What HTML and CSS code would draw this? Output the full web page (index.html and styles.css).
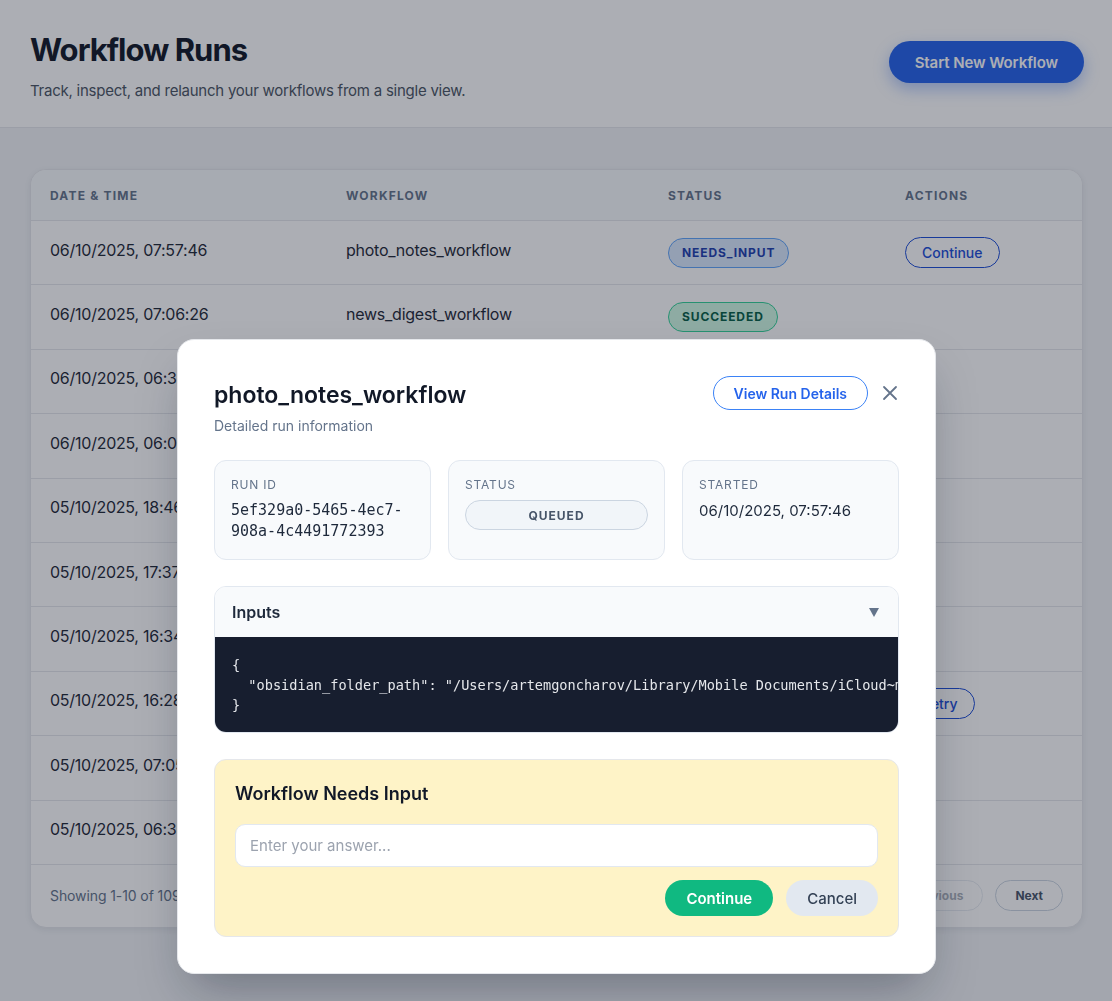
FILE: index.html
```html
<!DOCTYPE html>
<html lang="en">
<head>
<meta charset="utf-8">
<title>Workflow Runs</title>
<link rel="stylesheet" href="styles.css">
</head>
<body>
<header class="page-header">
  <div class="page-heading">
    <h1 class="page-title">Workflow Runs</h1>
    <p class="page-subtitle">Track, inspect, and relaunch your workflows from a single view.</p>
  </div>
  <button class="btn-primary" type="button">Start New Workflow</button>
</header>

<main class="page-main">
  <section class="runs-card">
    <table class="runs-table">
      <colgroup>
        <col class="col-date"><col class="col-workflow"><col class="col-status"><col class="col-actions">
      </colgroup>
      <thead>
        <tr><th>Date &amp; Time</th><th>Workflow</th><th>Status</th><th>Actions</th></tr>
      </thead>
      <tbody>
        <tr>
          <td class="cell-text">06/10/2025, 07:57:46</td>
          <td class="cell-text">photo_notes_workflow</td>
          <td><span class="badge badge-info">NEEDS_INPUT</span></td>
          <td><button class="btn-row" type="button">Continue</button></td>
        </tr>
        <tr>
          <td class="cell-text">06/10/2025, 07:06:26</td>
          <td class="cell-text">news_digest_workflow</td>
          <td><span class="badge badge-success">SUCCEEDED</span></td>
          <td></td>
        </tr>
        <tr>
          <td class="cell-text">06/10/2025, 06:31:12</td>
          <td class="cell-text">news_digest_workflow</td>
          <td><span class="badge badge-success">SUCCEEDED</span></td>
          <td></td>
        </tr>
        <tr>
          <td class="cell-text">06/10/2025, 06:04:51</td>
          <td class="cell-text">photo_notes_workflow</td>
          <td><span class="badge badge-success">SUCCEEDED</span></td>
          <td></td>
        </tr>
        <tr>
          <td class="cell-text">05/10/2025, 18:46:03</td>
          <td class="cell-text">news_digest_workflow</td>
          <td><span class="badge badge-success">SUCCEEDED</span></td>
          <td></td>
        </tr>
        <tr>
          <td class="cell-text">05/10/2025, 17:37:29</td>
          <td class="cell-text">photo_notes_workflow</td>
          <td><span class="badge badge-success">SUCCEEDED</span></td>
          <td></td>
        </tr>
        <tr>
          <td class="cell-text">05/10/2025, 16:34:40</td>
          <td class="cell-text">photo_notes_workflow</td>
          <td><span class="badge badge-success">SUCCEEDED</span></td>
          <td></td>
        </tr>
        <tr>
          <td class="cell-text">05/10/2025, 16:28:15</td>
          <td class="cell-text">photo_notes_workflow</td>
          <td><span class="badge badge-danger">FAILED</span></td>
          <td><button class="btn-row" type="button">Retry</button></td>
        </tr>
        <tr>
          <td class="cell-text">05/10/2025, 07:05:58</td>
          <td class="cell-text">news_digest_workflow</td>
          <td><span class="badge badge-success">SUCCEEDED</span></td>
          <td></td>
        </tr>
        <tr>
          <td class="cell-text">05/10/2025, 06:34:22</td>
          <td class="cell-text">news_digest_workflow</td>
          <td><span class="badge badge-success">SUCCEEDED</span></td>
          <td></td>
        </tr>
      </tbody>
    </table>
    <div class="runs-footer">
      <span class="runs-count">Showing 1-10 of 109 runs</span>
      <div class="pager">
        <button class="pager-btn" type="button" disabled>Previous</button>
        <button class="pager-btn" type="button">Next</button>
      </div>
    </div>
  </section>
</main>

<div class="overlay">
  <div class="modal" role="dialog" aria-modal="true">
    <div class="modal-header">
      <div>
        <h2 class="modal-title">photo_notes_workflow</h2>
        <p class="modal-subtitle">Detailed run information</p>
      </div>
      <div class="modal-actions">
        <button class="btn-outline" type="button">View Run Details</button>
        <button class="btn-close" type="button" aria-label="Close">
          <svg width="16" height="16" viewBox="0 0 16 16"><path d="M2 2 L14 14 M14 2 L2 14" stroke="#64748b" stroke-width="1.8" stroke-linecap="round" fill="none"/></svg>
        </button>
      </div>
    </div>

    <div class="info-grid">
      <div class="info-card">
        <div class="info-label">Run ID</div>
        <div class="info-value mono">5ef329a0-5465-4ec7-908a-4c4491772393</div>
      </div>
      <div class="info-card">
        <div class="info-label">Status</div>
        <div class="status-pill">QUEUED</div>
      </div>
      <div class="info-card">
        <div class="info-label">Started</div>
        <div class="info-value">06/10/2025, 07:57:46</div>
      </div>
    </div>

    <div class="inputs-panel">
      <div class="inputs-head">
        <span>Inputs</span>
        <svg class="caret" width="10" height="9" viewBox="0 0 10 9"><path d="M0 0 H10 L5 9 Z" fill="#64748b"/></svg>
      </div>
<pre class="inputs-code">{
  "obsidian_folder_path": "/Users/artemgoncharov/Library/Mobile Documents/iCloud~md~obsidian/Documents/Notes"
}</pre>
    </div>

    <div class="needs-panel">
      <h3 class="needs-title">Workflow Needs Input</h3>
      <input class="answer-input" type="text" placeholder="Enter your answer...">
      <div class="needs-actions">
        <button class="btn-success" type="button">Continue</button>
        <button class="btn-muted" type="button">Cancel</button>
      </div>
    </div>
  </div>
</div>
</body>
</html>
```

FILE: styles.css
```css
* { box-sizing: border-box; }
html, body { margin: 0; }
body {
  font-family: Inter, "Noto Sans", "Liberation Sans", sans-serif;
  background: #f1f3f6;
  color: #1e293b;
  min-height: 100vh;
}
button { font-family: inherit; cursor: pointer; }

/* Header */
.page-header {
  display: flex;
  justify-content: space-between;
  align-items: flex-start;
  background: #ffffff;
  border-bottom: 1px solid #e5e7eb;
  padding: 31px 28px 25px 30px;
}
.page-title {
  margin: 0;
  font-size: 31px;
  line-height: 38px;
  font-weight: 700;
  color: #111827;
  letter-spacing: -1px;
}
.page-subtitle {
  margin: 11px 0 0;
  font-size: 15px;
  line-height: 22px;
  color: #4b5563;
  letter-spacing: -0.24px;
}
.btn-primary {
  margin-top: 10px;
  height: 42px;
  padding: 0 26px;
  border: none;
  border-radius: 999px;
  background: #2563eb;
  color: #ffffff;
  font-size: 15px;
  font-weight: 600;
  letter-spacing: -0.1px;
  box-shadow: 0 6px 16px rgba(37, 99, 235, 0.35);
}

/* Table card */
.page-main { padding: 41px 29px 40px 30px; }
.runs-card {
  background: #ffffff;
  border: 1px solid #e5e7eb;
  border-radius: 16px;
  overflow: hidden;
  box-shadow: 0 2px 6px rgba(15, 23, 42, 0.07);
}
.runs-table {
  width: 100%;
  border-collapse: separate;
  border-spacing: 0;
  table-layout: fixed;
}
.col-date { width: 296px; }
.col-workflow { width: 322px; }
.col-status { width: 237px; }
.runs-table th {
  height: 50px;
  padding: 0 19px;
  text-align: left;
  font-size: 12px;
  font-weight: 700;
  letter-spacing: 1.2px;
  text-transform: uppercase;
  color: #64748b;
  background: #f8fafc;
}
.runs-table td {
  height: 64.4px;
  padding: 0 19px;
  border-top: 1px solid #e5e7eb;
  font-size: 16px;
  color: #1f2937;
  vertical-align: middle;
  white-space: nowrap;
}
.runs-table td.cell-text {
  padding-bottom: 6px;
  letter-spacing: -0.25px;
}

.badge {
  display: inline-block;
  height: 30px;
  line-height: 28px;
  padding: 0 13px;
  border-radius: 999px;
  border: 1px solid;
  font-size: 12px;
  font-weight: 700;
  letter-spacing: 0.9px;
}
.badge-info { background: #dbeafe; border-color: #60a5fa; color: #1e40af; }
.badge-success { background: #d1fae5; border-color: #34d399; color: #065f46; }
.badge-danger { background: #fee2e2; border-color: #f87171; color: #991b1b; }

.btn-row {
  height: 31px;
  padding: 0 16px;
  border: 1px solid #1d4ed8;
  border-radius: 999px;
  background: transparent;
  color: #1d4ed8;
  font-size: 14px;
  font-weight: 500;
}

.runs-footer {
  height: 63px;
  border-top: 1px solid #e5e7eb;
  padding: 0 19px 0 19px;
  display: flex;
  align-items: center;
  justify-content: space-between;
}
.runs-count { font-size: 14px; color: #64748b; letter-spacing: -0.1px; }
.pager { display: flex; gap: 12px; }
.pager-btn {
  height: 31px;
  padding: 0 19px;
  border: 1px solid #cbd5e1;
  border-radius: 999px;
  background: #ffffff;
  color: #475569;
  font-size: 12px;
  font-weight: 700;
}
.pager-btn:disabled { opacity: 0.45; cursor: default; }

/* Modal */
.overlay {
  position: fixed;
  inset: 0;
  background: rgba(17, 24, 39, 0.35);
  display: flex;
  justify-content: center;
  align-items: flex-start;
  padding: 339px 0 0 1px;
}
.modal {
  width: 759px;
  background: #ffffff;
  border: 1px solid #e5e7eb;
  border-radius: 17px;
  padding: 38px 36px 36px;
  box-shadow: 0 25px 50px -12px rgba(15, 23, 42, 0.35);
}
.modal-header {
  display: flex;
  justify-content: space-between;
  align-items: flex-start;
}
.modal-title {
  margin: 0;
  font-size: 23px;
  line-height: 34px;
  font-weight: 600;
  color: #111827;
}
.modal-subtitle {
  margin: 4px 0 0;
  font-size: 14px;
  line-height: 20px;
  color: #64748b;
}
.modal-actions {
  display: flex;
  align-items: center;
  gap: 13px;
  margin-top: -2px;
}
.btn-outline {
  height: 34px;
  padding: 0 20px;
  border: 1px solid #3b82f6;
  border-radius: 999px;
  background: #ffffff;
  color: #2563eb;
  font-size: 14px;
  font-weight: 600;
}
.btn-close {
  width: 18px;
  height: 18px;
  padding: 0;
  border: none;
  background: none;
  display: flex;
  align-items: center;
  justify-content: center;
}

.info-grid {
  display: grid;
  grid-template-columns: repeat(3, 1fr);
  gap: 17px;
  margin-top: 24px;
}
.info-card {
  background: #f8fafc;
  border: 1px solid #e2e8f0;
  border-radius: 12px;
  padding: 15px 16px;
  min-height: 100px;
}
.info-label {
  font-size: 12px;
  line-height: 18px;
  letter-spacing: 0.8px;
  text-transform: uppercase;
  color: #64748b;
}
.info-value {
  margin-top: 6px;
  font-size: 15px;
  line-height: 21px;
  color: #1e293b;
}
.mono { font-family: "DejaVu Sans Mono", "Liberation Mono", monospace; }
.status-pill {
  margin-top: 6px;
  height: 30px;
  border: 1px solid #cbd5e1;
  border-radius: 999px;
  background: #f1f5f9;
  display: flex;
  align-items: center;
  justify-content: center;
  font-size: 12px;
  font-weight: 700;
  letter-spacing: 1px;
  color: #475569;
}

.inputs-panel {
  margin-top: 26px;
  border: 1px solid #e2e8f0;
  border-radius: 12px;
  overflow: hidden;
}
.inputs-head {
  height: 50px;
  padding: 0 19px 0 17px;
  display: flex;
  align-items: center;
  justify-content: space-between;
  background: #f8fafc;
  font-size: 16px;
  font-weight: 600;
  color: #1e293b;
}
.inputs-code {
  margin: 0;
  padding: 18px 17px 17px;
  background: #171e2f;
  color: #e5e7eb;
  font-family: "DejaVu Sans Mono", "Liberation Mono", monospace;
  font-size: 13.6px;
  line-height: 20px;
  white-space: pre;
  overflow: hidden;
}

.needs-panel {
  margin-top: 26px;
  background: #fef3c7;
  border: 1px solid #e5e7eb;
  border-radius: 12px;
  padding: 20px;
}
.needs-title {
  margin: 0;
  font-size: 18px;
  line-height: 28px;
  font-weight: 600;
  color: #111827;
}
.answer-input {
  display: block;
  width: 100%;
  margin-top: 16px;
  height: 43px;
  padding: 0 14px;
  border: 1px solid #e2e8f0;
  border-radius: 10px;
  background: #ffffff;
  font-family: inherit;
  font-size: 15px;
  color: #1e293b;
  outline: none;
}
.answer-input::placeholder { color: #9ca3af; }
.needs-actions {
  display: flex;
  justify-content: flex-end;
  gap: 13px;
  margin-top: 13px;
}
.btn-success {
  height: 36px;
  padding: 0 21px;
  border: none;
  border-radius: 999px;
  background: #10b981;
  color: #ffffff;
  font-size: 15px;
  font-weight: 600;
}
.btn-muted {
  height: 36px;
  padding: 0 21px;
  border: none;
  border-radius: 999px;
  background: #e2e8f0;
  color: #334155;
  font-size: 15px;
  font-weight: 500;
}
```
